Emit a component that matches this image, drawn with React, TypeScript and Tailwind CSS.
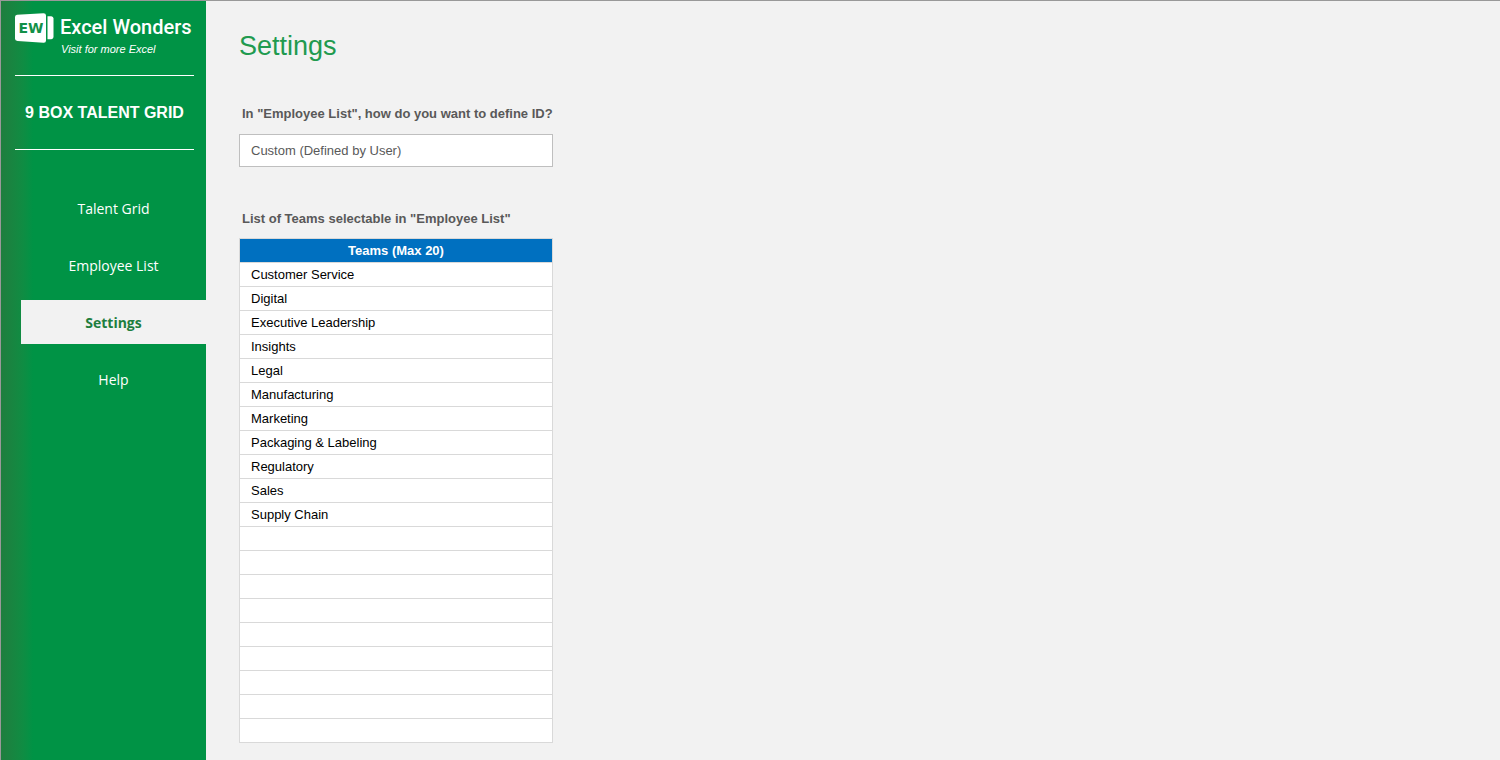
import React, { useState } from "react";
import { clsx } from "clsx";

const navItems = ["Talent Grid", "Employee List", "Settings", "Help"];

const initialTeams = [
  "Customer Service",
  "Digital",
  "Executive Leadership",
  "Insights",
  "Legal",
  "Manufacturing",
  "Marketing",
  "Packaging & Labeling",
  "Regulatory",
  "Sales",
  "Supply Chain",
];

const MAX_TEAMS = 20;

function Logo() {
  return (
    <svg
      width="39"
      height="30"
      viewBox="0 0 39 30"
      className="shrink-0"
      aria-hidden="true"
    >
      <path
        d="M2 1.8 28.500 0.200q2.500 0 2.500 2.300v25q0 2.500-2.500 2.300L2.500 28Q0 27.800 0 25.800V4Q0 2 2 1.800Z"
        fill="#fff"
      />
      <path
        d="M32.500 3.200H36.300q2.200 0.300 2.200 2.300v18.500q0 2-2.200 2.300h-3.800Z"
        fill="#fff"
      />
      <text
        x="16"
        y="20"
        textAnchor="middle"
        className="fill-[#129048] font-['DejaVu_Sans',sans-serif] text-[14px] font-bold"
      >
        EW
      </text>
    </svg>
  );
}

function Sidebar({
  active,
  onSelect,
}: {
  active: string;
  onSelect: (item: string) => void;
}) {
  return (
    <aside className="w-[205px] shrink-0 bg-[#009345] bg-linear-to-r from-[#1e7e3e] to-[#009345] to-[32px] text-white">
      <div className="mr-3 ml-3.5 h-[75px] border-b border-white pt-3">
        <a href="#home" className="flex gap-1.5">
          <Logo />
          <div>
            <div className="whitespace-nowrap font-['Roboto',sans-serif] text-xl leading-7 font-medium">
              Excel Wonders
            </div>
            <div className="pl-px text-[11px] leading-4 italic">
              Visit for more Excel
            </div>
          </div>
        </a>
      </div>
      <h2 className="mr-3 ml-3.5 flex h-[74px] items-center justify-center whitespace-nowrap border-b border-white text-base font-bold">
        9 BOX TALENT GRID
      </h2>
      <nav className="mt-9 ml-5 flex flex-col gap-[13px]">
        {navItems.map((item) => (
          <button
            key={item}
            type="button"
            onClick={() => onSelect(item)}
            className={clsx(
              "h-11 w-full pt-0.5 font-['Open_Sans',sans-serif] text-sm",
              item === active && "bg-[#f2f2f2] font-bold text-[#1e7e3e]"
            )}
          >
            {item}
          </button>
        ))}
      </nav>
    </aside>
  );
}

function TeamsTable({ teams }: { teams: string[] }) {
  const rows = Array.from({ length: MAX_TEAMS }, (_, i) => teams[i] ?? "");

  return (
    <table
      aria-labelledby="teams-title"
      className="w-full border-collapse border border-[#d9d9d9] bg-white text-[13px] leading-4 text-black"
    >
      <thead>
        <tr className="h-6 bg-[#0070c0] text-white">
          <th className="border border-[#d9d9d9] p-0 font-bold">
            Teams (Max 20)
          </th>
        </tr>
      </thead>
      <tbody>
        {rows.map((team, i) => (
          <tr key={i} className="h-6">
            <td className="border border-[#d9d9d9] px-[11px] py-0">{team}</td>
          </tr>
        ))}
      </tbody>
    </table>
  );
}

export default function App() {
  const [active, setActive] = useState("Settings");
  const [idMode, setIdMode] = useState("custom");

  return (
    <div className="flex min-h-screen border-t border-l border-[#999] bg-[#f2f2f2] font-['Liberation_Sans',Arial,sans-serif]">
      <Sidebar active={active} onSelect={setActive} />

      <main className="flex-1 pt-[25px] pl-[33px] text-[#595959]">
        <h1 className="text-[27px] leading-10 text-[#219a4f]">Settings</h1>

        <div className="mt-10 w-full max-w-[314px]">
          <label
            htmlFor="id-mode"
            className="block whitespace-nowrap pl-[3px] text-[13px] leading-4 font-bold"
          >
            In "Employee List", how do you want to define ID?
          </label>
          <select
            id="id-mode"
            value={idMode}
            onChange={(e) => setIdMode(e.target.value)}
            className="mt-3 h-[33px] w-full appearance-none border border-[#bfbfbf] bg-white px-[11px] text-[13px]"
          >
            <option value="custom">Custom (Defined by User)</option>
            <option value="auto">Automatic</option>
          </select>

          <h3
            id="teams-title"
            className="mt-11 mb-[11px] whitespace-nowrap pl-[3px] text-[13px] leading-4 font-bold"
          >
            List of Teams selectable in "Employee List"
          </h3>
          <TeamsTable teams={initialTeams} />
        </div>
      </main>
    </div>
  );
}
